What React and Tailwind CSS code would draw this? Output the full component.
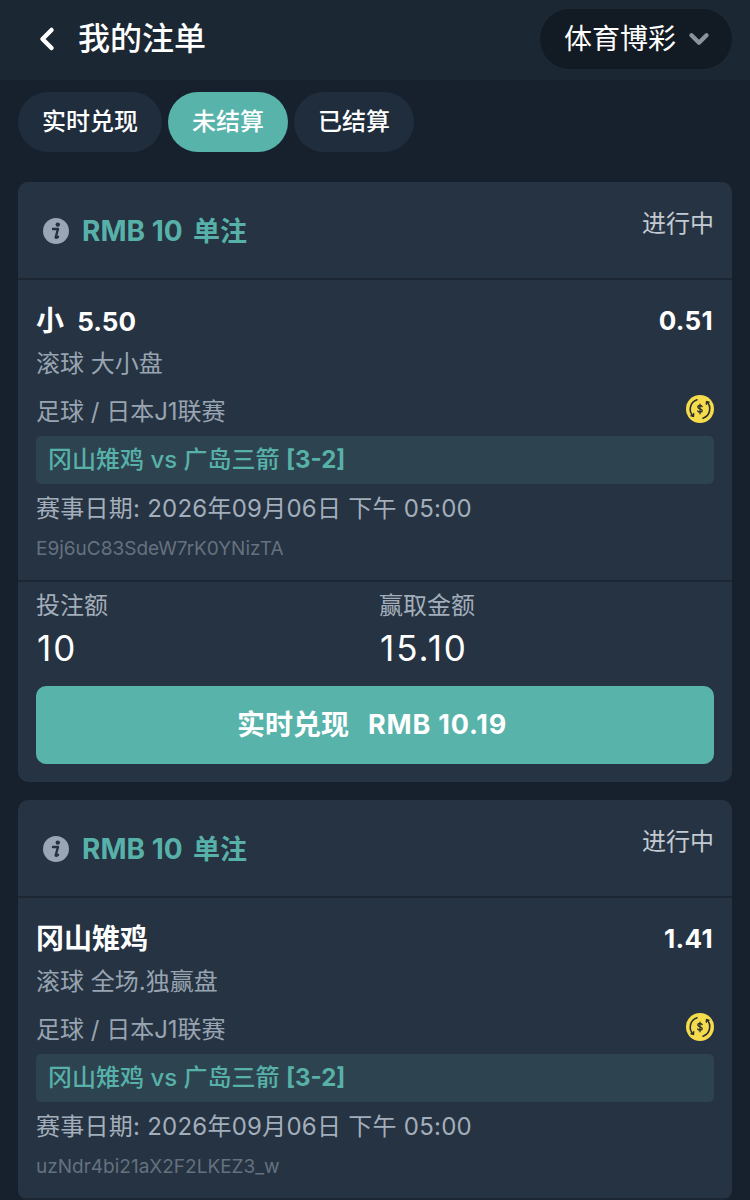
import React from "react";
import { ChevronLeft, ChevronDown } from "lucide-react";

const font = "font-['Inter','Noto_Sans_CJK_SC',sans-serif]";

function InfoIcon() {
  return (
    <svg width="26" height="26" viewBox="0 0 26 26" className="shrink-0">
      <circle cx="13" cy="13" r="13" fill="#9aa5b5" />
      <circle cx="14.8" cy="6.6" r="2.2" fill="#27323f" />
      <path d="M10 11h5l-2.300 8.200c-.2.8.6 1 2.300-.4" fill="none" stroke="#27323f" strokeWidth="2.400" strokeLinecap="round" strokeLinejoin="round" />
    </svg>
  );
}

function CoinIcon() {
  return (
    <svg width="28" height="28" viewBox="0 0 28 28" className="shrink-0 mb-[6px]">
      <circle cx="14" cy="14" r="14" fill="#f5dc4c" />
      <path d="M11 4.800A9.800 9.800 0 0 0 7.400 21.300" fill="none" stroke="#2b2f33" strokeWidth="1.600" strokeLinecap="round" />
      <path d="M17 23.200A9.800 9.800 0 0 0 20.600 6.700" fill="none" stroke="#2b2f33" strokeWidth="1.600" strokeLinecap="round" />
      <path d="M5 20.700l2.400.6.3-2.500M23 7.300l-2.400-.6-.3 2.500" fill="none" stroke="#2b2f33" strokeWidth="1.400" strokeLinecap="round" strokeLinejoin="round" />
      <path d="M16.200 11.700c-.3-.8-1.100-1.200-2.200-1.200-1.300 0-2.200.6-2.200 1.600s1 1.400 2.200 1.700 2.200.7 2.200 1.700-.9 1.600-2.200 1.600c-1.100 0-1.900-.4-2.200-1.200M14 9.200v9.600" fill="none" stroke="#2b2f33" strokeWidth="1.300" strokeLinecap="round" />
    </svg>
  );
}

function BetCard({ title, odds, market, code, showStake }) {
  return (
    <div className="bg-[#263342] rounded-[10px] overflow-hidden shrink-0">
      <div className="h-[98px] flex justify-between pl-[25px] pr-[18px] border-b-2 border-[#1c2733]">
        <div className="flex items-center gap-[13px] h-[98px]">
          <InfoIcon />
          <span className="text-[27px] font-bold text-[#57b1a9] leading-none">
            <span className="text-[28px] mr-[4px]">RMB 10</span> 单注
          </span>
        </div>
        <span className="text-[24px] text-[#c3cad3] leading-none mt-[30px]">进行中</span>
      </div>
      <div className="h-[302px] px-[18px] pt-[25px] border-b-2 border-[#1c2733]">
        <div className="flex justify-between items-center h-[32px] font-bold text-white">
          <span className="text-[28px] leading-none whitespace-pre">{title}</span>
          <span className="text-[26px] leading-none mr-[1px] tracking-[0.3px]">{odds}</span>
        </div>
        <div className="text-[24px] text-[#98a4b1] leading-none mt-[15px]">{market}</div>
        <div className="flex justify-between items-center mt-[22px] h-[28px]">
          <span className="text-[24px] text-[#98a4b1] leading-none">足球 / 日本J1联赛</span>
          <CoinIcon />
        </div>
        <div className="h-[48px] mt-[10px] rounded-[5px] bg-[#2d4450] flex items-center pl-[12px] text-[24px] font-medium text-[#57b1a9]">
          <span>冈山雉鸡 vs 广岛三箭 <span className="font-bold">[3-2]</span></span>
        </div>
        <div className="text-[24px] text-[#a3aebb] leading-none mt-[13px] tracking-[0.25px]">赛事日期: 2026年09月06日 下午 05:00</div>
        <div className="text-[19px] text-[#65717f] leading-none mt-[18px]">{code}</div>
      </div>
      {showStake && (
        <div className="px-[18px] pt-[12px] pb-[18px]">
          <div className="flex">
            <div className="w-[343px]">
              <div className="text-[24px] text-[#a3aebb] leading-none">投注额</div>
              <div className="text-[35px] text-white leading-none mt-[13px] ml-[1px] tracking-[2px]">10</div>
            </div>
            <div>
              <div className="text-[24px] text-[#a3aebb] leading-none">赢取金额</div>
              <div className="text-[35px] text-white leading-none mt-[13px] ml-[1px] tracking-[2px]">15.10</div>
            </div>
          </div>
          <div className="h-[78px] mt-[20px] pr-[6px] rounded-[10px] bg-[#58b3ab] flex items-center justify-center gap-[19px] text-[27px] font-bold text-white">
            <span className="text-[28px] font-semibold">实时兑现</span>
            <span className="tracking-[0.8px]">RMB 10.19</span>
          </div>
        </div>
      )}
    </div>
  );
}

export default function App() {
  return (
    <div className={`w-[750px] h-[1200px] overflow-hidden bg-[#17212d] flex flex-col ${font}`}>
      <div className="h-[80px] shrink-0 bg-[#1b2733] flex items-center justify-between pl-[29px] pr-[18px]">
        <div className="flex items-center gap-[13px] text-white -mt-[3px]">
          <ChevronLeft size={36} strokeWidth={3} />
          <span className="text-[32px] font-medium leading-none">我的注单</span>
        </div>
        <div className="w-[192px] h-[60px] rounded-full bg-[#121a23] flex items-center pl-[24px] gap-[8px] -mt-[2px]">
          <span className="text-[28px] text-white leading-none">体育博彩</span>
          <ChevronDown size={30} strokeWidth={3.5} className="text-[#8a929a]" />
        </div>
      </div>
      <div className="flex gap-[6px] px-[18px] mt-[12px]">
        <div className="w-[144px] h-[60px] rounded-full bg-[#1f2d3d] flex items-center justify-center text-[24px] font-medium text-white">实时兑现</div>
        <div className="w-[120px] h-[60px] rounded-full bg-[#58b3ab] flex items-center justify-center text-[24px] font-medium text-white">未结算</div>
        <div className="w-[120px] h-[60px] rounded-full bg-[#1f2d3d] flex items-center justify-center text-[24px] font-medium text-white">已结算</div>
      </div>
      <div className="flex flex-col gap-[18px] px-[18px] mt-[30px]">
        <BetCard title={<>小  <span className="text-[26px]">5.50</span></>} odds="0.51" market="滚球 大小盘" code="E9j6uC83SdeW7rK0YNizTA" showStake />
        <BetCard title="冈山雉鸡" odds="1.41" market="滚球 全场.独赢盘" code="uzNdr4bi21aX2F2LKEZ3_w" />
      </div>
    </div>
  );
}
